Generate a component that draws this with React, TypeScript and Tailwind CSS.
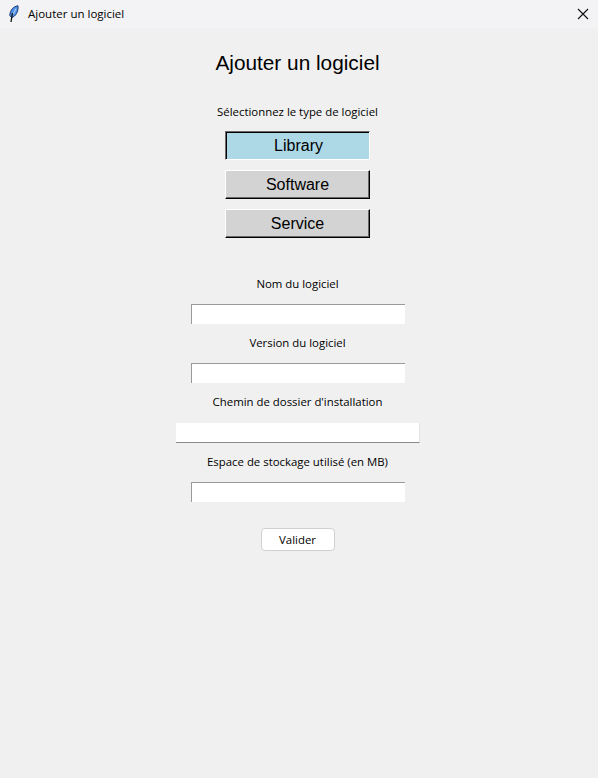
function Feather() {
  return (
    <svg width="16" height="18" viewBox="0 0 16 18" className="ml-[6px]">
      <path d="M12 0.8C7.5 1.2 4 5 3.8 10.5L5.6 12.6C9.8 11.4 12.6 6.5 12 0.8Z" fill="#4f8fe6" stroke="#1d3a6e" strokeWidth="1" />
      <path d="M10 3.5L7.4 9" stroke="#bcd6f5" strokeWidth="1" fill="none" />
      <path d="M6.4 8L5 17" stroke="#111" strokeWidth="1.3" fill="none" />
    </svg>
  );
}

function TypeButton({ label, active }: { label: string; active?: boolean }) {
  return (
    <div
      className={
        active
          ? "w-[145px] h-[29px] pl-[2px] pt-[1px] flex items-center justify-center bg-[#add8e6] border border-t-[#696969] border-l-[#696969] border-r-white border-b-white shadow-[inset_1px_1px_0_#000] text-[16px] text-black [font-family:'Liberation_Sans',sans-serif]"
          : "w-[145px] h-[29px] flex items-center justify-center bg-[#d3d3d3] border border-t-white border-l-white border-r-black border-b-black shadow-[inset_-1px_-1px_0_#696969] text-[16px] text-black [font-family:'Liberation_Sans',sans-serif]"
      }
    >
      {label}
    </div>
  );
}

function Field({ label, wide }: { label: string; wide?: boolean }) {
  return (
    <div className="flex flex-col items-center">
      <div className="h-[20px] leading-[20px] text-[11.4px] text-black">{label}</div>
      <div
        className={
          wide
            ? "mt-[11px] w-[244px] h-[20px] bg-white border-b border-r border-b-[#8a8a8a] border-r-[#e4e4e4]"
            : "mt-[10px] w-[214px] h-[20px] bg-white border-t border-l border-[#9a9a9a]"
        }
      />
    </div>
  );
}

export default function App() {
  return (
    <div className="w-[598px] h-[778px] bg-[#f0f0f0] flex flex-col overflow-hidden [font-family:'Open_Sans','Noto_Sans',sans-serif]">
      <div className="h-[28px] bg-[#f3f3f5] flex items-center shrink-0">
        <Feather />
        <span className="ml-[6px] text-[11.5px] text-black">Ajouter un logiciel</span>
        <svg width="12" height="12" viewBox="0 0 12 12" className="ml-auto mr-[9px]">
          <path d="M1 1L11 11M11 1L1 11" stroke="#111" strokeWidth="1.1" />
        </svg>
      </div>
      <div className="flex flex-col items-center w-[595px]">
        <div className="mt-[21px] h-[28px] leading-[28px] text-[20.8px] text-black [font-family:'Liberation_Sans',sans-serif]">
          Ajouter un logiciel
        </div>
        <div className="mt-[25px] h-[20px] leading-[20px] text-[11.4px] text-black">Sélectionnez le type de logiciel</div>
        <div className="mt-[9px] flex flex-col gap-[10px]">
          <TypeButton label="Library" active />
          <TypeButton label="Software" />
          <TypeButton label="Service" />
        </div>
        <div className="mt-[36px] flex flex-col gap-[9px]">
          <Field label="Nom du logiciel" />
          <Field label="Version du logiciel" />
          <Field label="Chemin de dossier d'installation" wide />
          <Field label="Espace de stockage utilisé (en MB)" />
        </div>
        <div className="mt-[26px] w-[74px] h-[23px] flex items-center justify-center bg-white border border-[#d0d0d0] rounded-[4px] text-[11.4px] text-black">
          Valider
        </div>
      </div>
    </div>
  );
}
